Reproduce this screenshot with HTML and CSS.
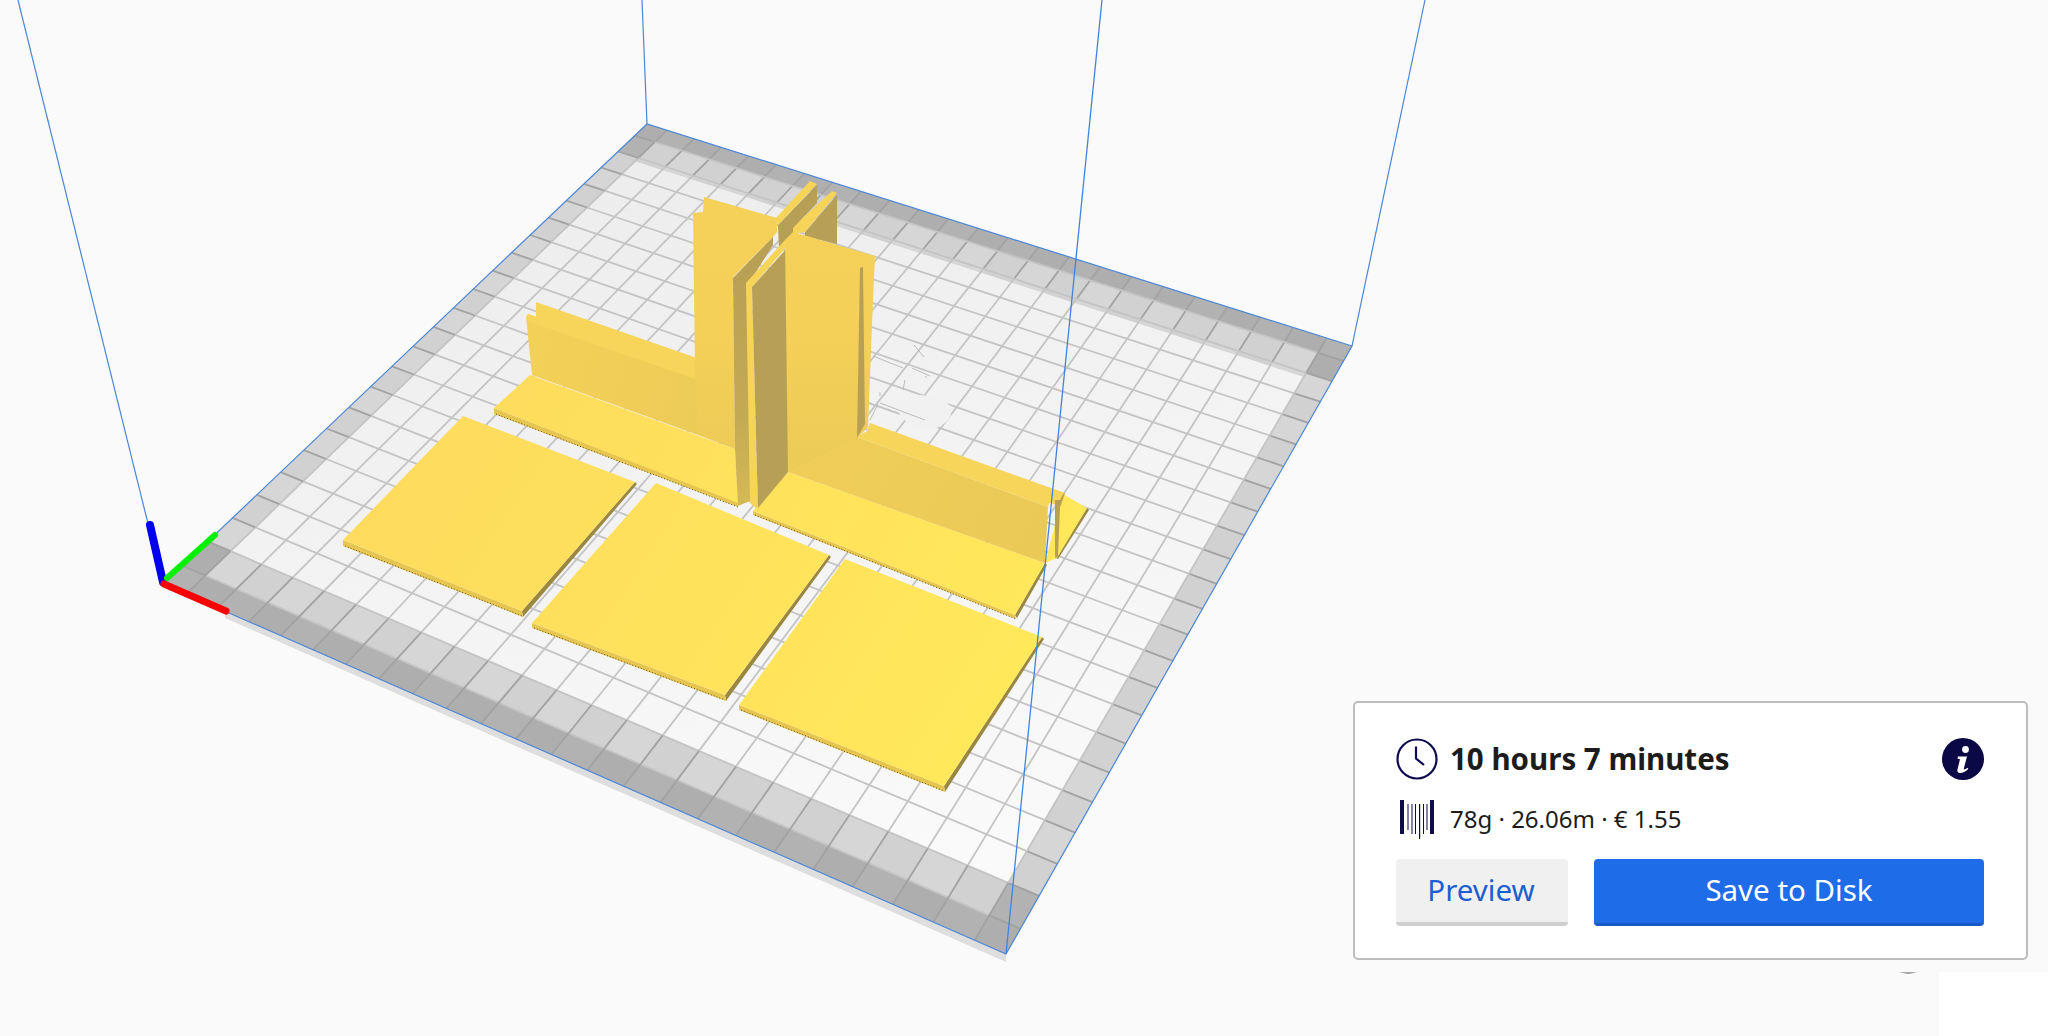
FILE: index.html
```html
<!DOCTYPE html>
<html lang="en">
<head>
<meta charset="utf-8">
<title>Print preview</title>
<link rel="stylesheet" href="styles.css">
</head>
<body>
<main class="viewport">
  <svg class="scene" viewBox="0 0 2048 1036" width="2048" height="1036">
    <defs>
      <linearGradient id="plateFill" x1="0.3" y1="0" x2="0.6" y2="1">
        <stop offset="0" stop-color="#ececec"/>
        <stop offset="1" stop-color="#fbfbfb"/>
      </linearGradient>
      <linearGradient id="flatFill" gradientUnits="userSpaceOnUse" x1="400" y1="420" x2="950" y2="780">
        <stop offset="0" stop-color="#fedb5e"/>
        <stop offset="1" stop-color="#ffe85a"/>
      </linearGradient>
      <linearGradient id="stripFill" gradientUnits="userSpaceOnUse" x1="740" y1="280" x2="740" y2="510">
        <stop offset="0" stop-color="#b9a055"/>
        <stop offset="0.6" stop-color="#c4aa54"/>
        <stop offset="1" stop-color="#d6ba55"/>
      </linearGradient>
      <linearGradient id="wallFill" gradientUnits="userSpaceOnUse" x1="540" y1="340" x2="700" y2="400">
        <stop offset="0" stop-color="#f3d158"/>
        <stop offset="1" stop-color="#edcb57"/>
      </linearGradient>
      <linearGradient id="wallFillRight" gradientUnits="userSpaceOnUse" x1="860" y1="430" x2="1050" y2="540">
        <stop offset="0" stop-color="#efcd58"/>
        <stop offset="1" stop-color="#ebc957"/>
      </linearGradient>
      <linearGradient id="towerFill" gradientUnits="userSpaceOnUse" x1="0" y1="200" x2="0" y2="450">
        <stop offset="0" stop-color="#f6d158"/>
        <stop offset="0.55" stop-color="#f4d058"/>
        <stop offset="1" stop-color="#edcb57"/>
      </linearGradient>
    </defs>

    <rect class="patch" x="1939" y="972" width="109" height="64"/>
    <path class="speck" d="M1899 972h18l-7 2h-3z"/>
    <polygon class="plate-side" points="225,611 1006,954 1006,962 225,618"/>
    <polygon class="plate" points="163,584 647,124 1352,346 1006,954"/>
    <g id="grid"></g>
    <polyline class="edge" points="163,584 647,124 1352,346 1006,954 163,584"/>
    <line class="edge" x1="647" y1="124" x2="642" y2="0"/>
    <line class="edge" x1="163" y1="584" x2="18" y2="0"/>
    <line class="edge" x1="1352" y1="346" x2="1425" y2="0"/>

    <path class="smudge" d="M900 400c15-8 40-6 50 6 6 12-10 24-24 24-14-2-36-16-26-30z"/>
    <g class="ghost">
      <path d="M873 356l30 12M912 368l18 8M880 403l45 17M870 420l8-16M880 392v4M925 376l2 2M914 345l10 12M905 380l-2 10"/>
    </g>

    <!-- flat squares -->
    <polygon class="side" points="522,611 635,482 637,484 523,617"/>
    <polygon class="side-front" points="343,540 522,611 523,617 343,546"/>
    <line class="teeth" x1="345" y1="546" x2="522" y2="616"/>
    <polygon class="flat" points="463,416 635,482 522,611 343,540"/>
    <polygon class="side" points="725,695 829,555 831,557 726,701"/>
    <polygon class="side-front" points="532,623 725,695 726,701 532,628"/>
    <line class="teeth" x1="534" y1="628" x2="725" y2="700"/>
    <polygon class="flat" points="656,483 829,555 725,695 532,623"/>
    <polygon class="side" points="944,786 1042,637 1044,639 945,792"/>
    <polygon class="side-front" points="739,705 944,786 945,792 739,710"/>
    <line class="teeth" x1="741" y1="710" x2="944" y2="791"/>
    <polygon class="flat" points="845,559 1042,637 944,786 739,705"/>

    <!-- far fins behind the towers -->
    <polygon class="shade" points="837,195 837,244 805,236 805,232"/>
    <polygon class="rim" points="832,191 837,193 805,232 793,234 792,228"/>
    <polygon class="shade" points="778,225 817,185 817,203 793,228 793,240 779,250"/>
    <polygon class="rim" points="810,181 817,184 778,225 776,218"/>

    <!-- left wing -->
    <polygon class="side-front" points="494,408 738,502 738,507 494,414"/>
    <line class="teeth" x1="496" y1="414" x2="738" y2="507"/>
    <polygon class="flat" points="494,408 530,375 735,449 738,503"/>
    <polygon class="ledge" points="536,302 697,358 697,373 536,318"/>
    <polygon class="wall" points="526,317 528,314 698,373 698,435 532,375"/>
    <polygon class="ledge" points="526,317 528,314 698,373 698,380 527,321"/>

    <!-- left tower -->
    <polygon class="tower" points="704,197 777,218 777,232 773,237 733,277 735,449 698,435 695,370 693,213 703,212"/>
    <polygon class="strip" points="733,278 773,237 773,245 749,283 752,500 738,506 735,449"/>

    <!-- right wing floor -->
    <polygon class="side" points="1087,508 1089,510 1058,559 1056,558"/>
    <polygon class="side" points="1015,615 1045,563 1047,565 1017,618"/>
    <polygon class="side-front" points="753,511 1015,615 1016,619 753,515"/>
    <line class="teeth" x1="755" y1="515" x2="1016" y2="619"/>
    <polygon class="flat" points="788,472 1045,563 1063,494 1087,508 1057,558 1045,563 1015,615 753,511"/>

    <!-- right wing wall -->
    <polygon class="ledge" points="870,423 1065,493 1061,507 866,433"/>
    <polygon class="rim-dark" points="1055,500 1060,500 1063,494 1065,493 1060,507 1058,557 1055,558"/>
    <polygon class="wall-right" points="857,437 1048,507 1045,563 788,472 788,360 857,330"/>
    <polygon class="ledge" points="857,437 865,432 1050,501 1048,507"/>

    <!-- centre fin -->
    <polygon class="rim" points="746,283 785,240 788,245 752,287 758,510 750,503"/>
    <polygon class="shade" points="752,287 788,247 788,472 758,508"/>

    <!-- front tower -->
    <polygon class="tower" points="785,240 793,232 875,256 873,300 868,427 857,438 788,472"/>
    <polygon class="shade" points="860,268 863,267 865,424 857,438"/>

    <!-- axes -->
    <line class="axis-blue" x1="163" y1="582" x2="150" y2="525"/>
    <line class="axis-green" x1="167" y1="578" x2="215" y2="535"/>
    <line class="axis-red" x1="164" y1="584" x2="226" y2="611"/>

    <line class="edge edge-front" x1="1006" y1="954" x2="1102" y2="0"/>
  </svg>

  <section class="card">
    <div class="time-row">
      <svg class="icon-clock" viewBox="0 0 42 42" width="42" height="42">
        <circle cx="21" cy="21" r="19.5"/>
        <path d="M20 8.500v12l8 6.500"/>
      </svg>
      <span class="time">10 hours 7 minutes</span>
      <svg class="icon-info" viewBox="0 0 42 42" width="42" height="42">
        <circle class="info-disc" cx="21" cy="21" r="21"/>
        <circle class="info-mark" cx="23.5" cy="11.5" r="3.4"/>
        <path class="info-mark" d="M16 18.500h9l-3.200 12c-.3 1 .9 1.400 3.700-.8l.8 1.300c-2.800 3-5.800 4.100-8.200 4-2.500-.1-3.100-1.700-2.600-3.800l2.500-9.900-2.500-.6z"/>
      </svg>
    </div>
    <div class="material-row">
      <svg class="icon-filament" viewBox="0 0 34 39" width="34" height="39">
        <rect x="0" y="0" width="4" height="34"/>
        <rect x="7.500" y="4" width="1" height="26"/>
        <rect x="11.500" y="4" width="1" height="30"/>
        <rect x="15" y="4" width="1" height="30"/>
        <rect x="19" y="4" width="1.200" height="35"/>
        <rect x="23" y="4" width="1" height="30"/>
        <rect x="26.500" y="4" width="1" height="26"/>
        <rect x="30" y="0" width="4" height="34"/>
      </svg>
      <span class="material">78g · 26.06m · € 1.55</span>
    </div>
    <div class="actions">
      <button class="btn btn-secondary" type="button">Preview</button>
      <button class="btn btn-primary" type="button">Save to Disk</button>
    </div>
  </section>
</main>
<script src="grid.js"></script>
</body>
</html>
```

FILE: styles.css
```css
* { box-sizing: border-box; }
html, body { margin: 0; height: 100%; }
body {
  background: #fafafa;
  font-family: "Noto Sans", "Open Sans", sans-serif;
  overflow: hidden;
}
.viewport { position: relative; width: 2048px; height: 1036px; overflow: hidden; }
.scene { display: block; }

.patch { fill: #ffffff; }
.speck { fill: #a8a8a8; }
.plate { fill: url(#plateFill); }
.plate-side { fill: #dedede; }
.edge { fill: none; stroke: #4a86d8; stroke-width: 1.2; }
.edge-front { stroke: #3f84dd; stroke-width: 1.3; }

.cell-dark { fill: #b2b2b2; }
.cell-dark-alt { fill: #aeaeae; }
.cell-light { fill: #d6d6d6; }
.cell-light-alt { fill: #d1d1d1; }
.grid-line { stroke: #c4c4c4; fill: none; }
.grid-line-border { stroke: #a2a2a2; fill: none; }

.ghost path { fill: none; stroke: #bcbcbc; stroke-width: 1; }
.smudge { fill: #f1f1f1; }

.flat { fill: url(#flatFill); }
.side { fill: #9a8742; }
.side-front { fill: #e6c651; }
.teeth { stroke: #5e5224; stroke-width: 1; stroke-dasharray: 1 2; }
.ledge { fill: #f6d55a; }
.wall { fill: url(#wallFill); }
.wall-right { fill: url(#wallFillRight); }
.tower { fill: url(#towerFill); }
.shade { fill: #b89f56; }
.strip { fill: url(#stripFill); }
.rim { fill: #f6d458; }
.rim-dark { fill: #b99f50; }

.axis-blue { stroke: #0000f0; stroke-width: 8; stroke-linecap: round; }
.axis-green { stroke: #00f000; stroke-width: 6; stroke-linecap: round; }
.axis-red { stroke: #fa0000; stroke-width: 7; stroke-linecap: round; }

.card {
  position: absolute;
  left: 1353px;
  top: 701px;
  width: 675px;
  height: 259px;
  background: #ffffff;
  border: 2px solid #bdbdbd;
  border-radius: 5px;
  padding: 35px 42px 32px 41px;
  display: flex;
  flex-direction: column;
}
.time-row { display: flex; align-items: center; height: 42px; }
.icon-clock { flex: none; }
.icon-clock circle, .icon-clock path { fill: none; stroke: #0d0b4e; stroke-width: 2.2; }
.time {
  margin-left: 12px;
  padding-bottom: 2px;
  font-size: 29.5px;
  font-weight: 700;
  color: #1c1c1c;
  flex: 1;
}
.icon-info { flex: none; }
.info-disc { fill: #0a0845; }
.info-mark { fill: #ffffff; }

.material-row {
  display: flex;
  align-items: center;
  height: 39px;
  margin-top: 20px;
  padding-left: 4px;
}
.icon-filament { flex: none; fill: #0d0b4e; }
.material { margin-left: 16px; padding-bottom: 2px; font-size: 24px; color: #1c1c1c; }

.actions { display: flex; gap: 26px; margin-top: 20px; height: 67px; }
.btn {
  border: 0;
  border-radius: 4px;
  font-family: inherit;
  font-size: 29.5px;
  padding: 0 0 3px;
}
.btn-secondary {
  width: 172px;
  padding-right: 2px;
  background: #f0f0f0;
  color: #1b5fd0;
  border-bottom: 4px solid #cfcfcf;
}
.btn-primary {
  flex: 1;
  background: #1f6ce8;
  color: #ffffff;
  border-bottom: 3px solid #1858c8;
}
```

FILE: grid.js
```js
(function () {
  var SVG = 'http://www.w3.org/2000/svg';
  var P = [[163, 584], [1006, 954], [1352, 346], [647, 124]];
  var root = document.getElementById('grid');

  // square-to-quad homography: (0,0) (1,0) (1,1) (0,1)
  var dx1 = P[1][0] - P[2][0], dx2 = P[3][0] - P[2][0], sx = P[0][0] - P[1][0] + P[2][0] - P[3][0];
  var dy1 = P[1][1] - P[2][1], dy2 = P[3][1] - P[2][1], sy = P[0][1] - P[1][1] + P[2][1] - P[3][1];
  var det = dx1 * dy2 - dx2 * dy1;
  var g = (sx * dy2 - dx2 * sy) / det;
  var h = (dx1 * sy - sx * dy1) / det;
  var a = P[1][0] - P[0][0] + g * P[1][0];
  var b = P[3][0] - P[0][0] + h * P[3][0];
  var c = P[0][0];
  var d = P[1][1] - P[0][1] + g * P[1][1];
  var e = P[3][1] - P[0][1] + h * P[3][1];
  var f = P[0][1];
  function map(u, v) {
    var w = g * u + h * v + 1;
    return [(a * u + b * v + c) / w, (d * u + e * v + f) / w];
  }
  function fmt(p) { return p[0].toFixed(1) + ',' + p[1].toFixed(1); }

  var COUNT = 23.5, OFFSET = 0.75;
  var ticks = [0];
  for (var t = OFFSET; t < COUNT; t += 1) ticks.push(t / COUNT);
  ticks.push(1);
  var n = ticks.length - 1;

  function cell(i, j, cls, vLow) {
    var low = vLow === undefined ? ticks[j] : vLow;
    var el = document.createElementNS(SVG, 'polygon');
    el.setAttribute('class', cls);
    el.setAttribute('points', [
      map(ticks[i], low), map(ticks[i + 1], low),
      map(ticks[i + 1], ticks[j + 1]), map(ticks[i], ticks[j + 1])
    ].map(fmt).join(' '));
    root.appendChild(el);
  }
  for (var i = 0; i < n; i++) {
    for (var j = 0; j < n; j++) {
      var rowOuter = j === 0 || j === n - 1;
      var rowInner = j === 1 || j === n - 2;
      var colEdge = i === 0 || i === n - 1;
      var alt = (i + j) % 2 === 0;
      if (rowOuter || (rowInner && colEdge)) {
        cell(i, j, alt ? 'cell-dark' : 'cell-dark-alt');
      } else if (j === n - 2) {
        // the shaded band at the back reaches a little past its grid line
        cell(i, j, alt ? 'cell-light' : 'cell-light-alt', ticks[j] - 0.2 / COUNT);
      } else if (rowInner || colEdge) {
        cell(i, j, alt ? 'cell-light' : 'cell-light-alt');
      }
    }
  }
  function line(p, q, cls, w) {
    var el = document.createElementNS(SVG, 'line');
    el.setAttribute('class', cls);
    el.setAttribute('x1', p[0].toFixed(1));
    el.setAttribute('y1', p[1].toFixed(1));
    el.setAttribute('x2', q[0].toFixed(1));
    el.setAttribute('y2', q[1].toFixed(1));
    el.setAttribute('stroke-width', w);
    root.appendChild(el);
  }
  for (var k = 1; k < n; k++) {
    var s = ticks[k];
    line(map(s, ticks[2]), map(s, ticks[n - 2]), 'grid-line', 1.8);
    line(map(ticks[1], s), map(ticks[n - 1], s), 'grid-line', 1.8);
    line(map(s, 0), map(s, ticks[2]), 'grid-line-border', 1.8);
    line(map(s, ticks[n - 2]), map(s, 1), 'grid-line-border', 1.8);
    line(map(0, s), map(ticks[1], s), 'grid-line-border', 1.8);
    line(map(ticks[n - 1], s), map(1, s), 'grid-line-border', 1.8);
  }
})();
```
